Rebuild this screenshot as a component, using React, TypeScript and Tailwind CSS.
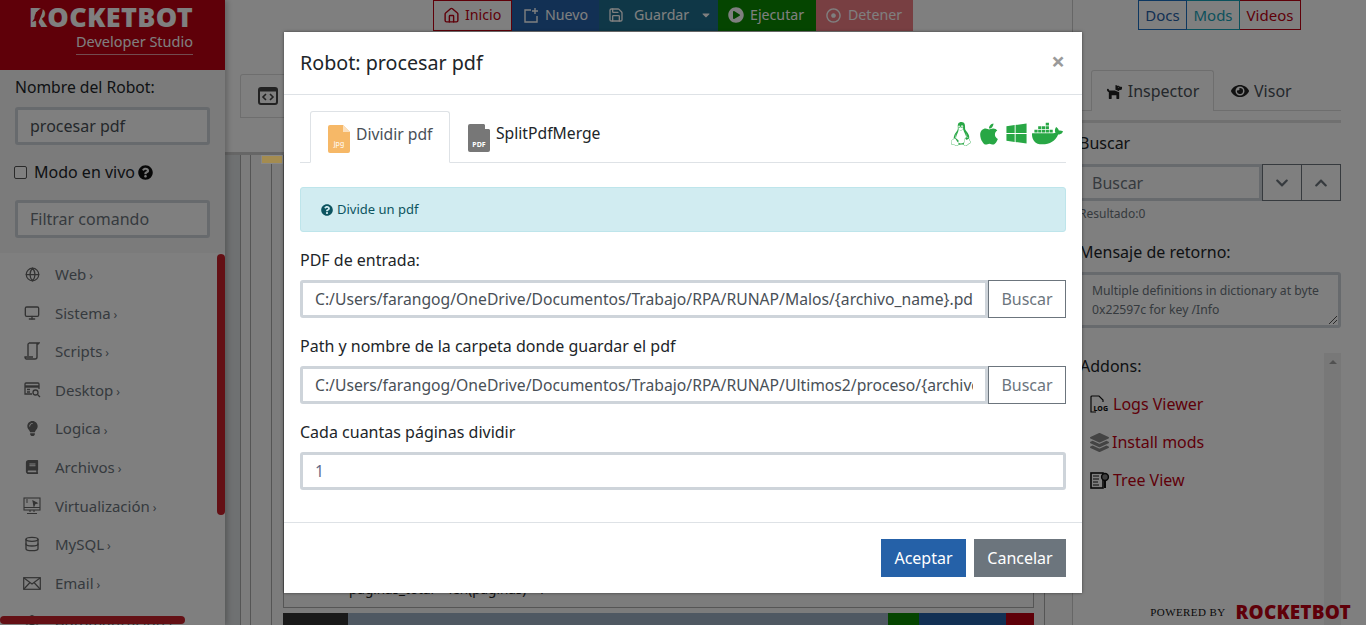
import { useState } from 'react';
import { Globe, Monitor, Database, Home, Save } from 'lucide-react';
import {
  FaApple, FaBook, FaCaretDown, FaChevronDown, FaChevronUp, FaDocker, FaDog, FaEye, FaLightbulb,
  FaLinux, FaPlayCircle, FaQuestionCircle, FaRegDotCircle, FaWindows, FaLayerGroup,
} from 'react-icons/fa';

const font = "font-['Noto_Sans',sans-serif]";

const ScriptIcon = () => (
  <svg width="16" height="18" viewBox="0 0 16 18" fill="none" stroke="currentColor" strokeWidth="1.4"><path d="M5 1h10l-1 1h-1v13a2 2 0 0 1-2 2H2a2 2 0 0 1-1-2h8v0M5 1a2 2 0 0 0-1 2v11" /></svg>
);
const DesktopIcon = () => (
  <svg width="17" height="16" viewBox="0 0 17 16" fill="none" stroke="currentColor" strokeWidth="1.3"><path d="M8 12H1V2a1 1 0 0 1 1-1h12a1 1 0 0 1 1 1v5" /><path d="M1 4.5h14" strokeWidth="2.4" /><circle cx="11.5" cy="10.5" r="2.5" /><path d="M13.5 12.5l2.5 2.5M3 7.5h3M3 10h3" /></svg>
);
const VirtualIcon = () => (
  <svg width="18" height="18" viewBox="0 0 18 18" fill="none" stroke="currentColor" strokeWidth="1.1"><rect x="1" y="1" width="16" height="12" /><path d="M1 10.5h16M7 13v2M11 13v2M4 16.5h10M3 3h2M3 5h2" /><path d="M10 4l4 2-2 .6L11 9z" fill="currentColor" /></svg>
);
const MailIcon = () => (
  <svg width="18" height="13" viewBox="0 0 18 13" fill="none" stroke="currentColor" strokeWidth="1.2"><rect x="0.7" y="0.7" width="16.6" height="11.6" /><path d="M1 1l8 6 8-6M1 12l6-6.5M17 12l-6-6.5" /></svg>
);

const commands = [
  { name: 'Web', icon: <Globe size={15} /> },
  { name: 'Sistema', icon: <Monitor size={16} /> },
  { name: 'Scripts', icon: <ScriptIcon /> },
  { name: 'Desktop', icon: <DesktopIcon /> },
  { name: 'Logica', icon: <FaLightbulb size={15} /> },
  { name: 'Archivos', icon: <FaBook size={14} /> },
  { name: 'Virtualización', icon: <VirtualIcon /> },
  { name: 'MySQL', icon: <Database size={16} /> },
  { name: 'Email', icon: <MailIcon /> },
  { name: 'Automatización', icon: <FaLayerGroup size={14} /> },
];

const Logo = () => (
  <div className="relative leading-none">
    <span className="block text-[27px] font-black leading-[24px] tracking-[0.3px] text-white">ROCKETBOT</span>
    <svg viewBox="0 0 10 14" className="absolute left-[3px] top-[2px] h-[18px] w-[12px]">
      <path d="M9 0 C4 2 2 6 2 9 L0 12 L3 11 L5 13 C7 8 9 5 9 0Z" fill="#be0012" />
    </svg>
  </div>
);

const Sidebar = () => (
  <aside className="relative z-10 flex h-[625px] w-[225px] shrink-0 flex-col overflow-hidden bg-white shadow-[2px_0_6px_rgba(0,0,0,0.25)]">
    <div className="flex h-[70px] shrink-0 flex-col items-end bg-[#be0012] pr-[32px] pt-[5px] shadow-md">
      <Logo />
      <div className="mt-[1px] border-b border-white/60 pb-[2px] text-[14.5px] leading-[22px] text-white">Developer Studio</div>
    </div>
    <div className="flex h-[183px] shrink-0 flex-col bg-[#f6f6f6] px-[15px] pt-[5px]">
      <label className="text-[15.7px] leading-[24px] text-[#212529]">Nombre del Robot:</label>
      <input readOnly value="procesar pdf" className="mt-[8px] h-[38px] w-[195px] rounded-[3px] border-[3px] border-[#ced4da] bg-white px-[12px] text-[16px] text-[#495057]" />
      <label className="-ml-px mt-[15px] flex items-center text-[16px] leading-[24px] text-[#212529]">
        <span className="mr-[7px] h-[13px] w-[13px] rounded-[2px] border border-[#555] bg-white" />
        Modo en vivo
        <FaQuestionCircle size={15} className="ml-[3px] text-[#111]" />
      </label>
      <input readOnly value="Filtrar comando" className="mt-[16px] h-[38px] w-[195px] rounded-[3px] border-[3px] border-[#ced4da] bg-white px-[12px] text-[16px] text-[#6c757d]" />
    </div>
    <ul className="pt-[2px]">
      {commands.map((c) => (
        <li key={c.name} className="flex h-[38.6px] items-center text-[15px] text-[#6c757d]">
          <span className="flex w-[55px] shrink-0 justify-center pl-[18px] pr-[9px] text-[#666]">{c.icon}</span>
          {c.name}
          <span className="ml-[3px] mt-[4px] text-[12px]">›</span>
        </li>
      ))}
    </ul>
    <div className="absolute right-0 top-[254px] h-[261px] w-[8px] rounded-[4px] bg-[#c8202a]" />
    <div className="absolute bottom-[1px] left-0 h-[8px] w-[185px] rounded-[4px] bg-[#c8202a]" />
  </aside>
);

const MainArea = () => (
  <main className="flex h-[625px] w-[847px] shrink-0 flex-col">
    <nav className="flex h-[31px] shrink-0 pl-[208px] text-[14.2px] leading-none text-white">
      <a className="flex w-[79px] items-center gap-[5px] border border-[#be0012] pb-[1px] pl-[9px] text-[#be0012]"><Home size={17} />Inicio</a>
      <a className="flex w-[87px] items-center gap-[5px] bg-[#2561a8] pb-[1px] pl-[11px]"><svg width="17" height="17" viewBox="0 0 17 17" fill="none" stroke="currentColor" strokeWidth="1.4"><path d="M8 3H2v12h12V9M12 1v6M9 4h6" /></svg>Nuevo</a>
      <a className="flex w-[119px] items-center gap-[10px] bg-[#1e6f8e] pb-[1px] pl-[9px]"><Save size={16} />Guardar<FaCaretDown size={12} className="ml-[1px]" /></a>
      <a className="flex w-[98px] items-center gap-[6px] bg-[#0a8a00] pb-[1px] pl-[10px]"><FaPlayCircle size={16} />Ejecutar</a>
      <a className="flex w-[97px] items-center gap-[7px] bg-[#f07f85] pb-[1px] pl-[10px]"><FaRegDotCircle size={15} />Detener</a>
    </nav>
    <div className="ml-[15px] mt-[43px] flex h-[44px] shrink-0 items-center border-b border-[#ddd]">
      <div className="flex h-[44px] w-[70px] items-center rounded-t-[3px] border border-b-0 border-[#ddd] pl-[17px]">
        <svg width="20" height="18" viewBox="0 0 20 18" className="shrink-0 text-[#444]"><rect x="1" y="1" width="18" height="16" rx="2" fill="none" stroke="currentColor" strokeWidth="2" /><path d="M1 3h18" stroke="currentColor" strokeWidth="3" /><path d="M8 7l-3 3 3 3M12 7l3 3-3 3" fill="none" stroke="currentColor" strokeWidth="1.6" /></svg>
      </div>
    </div>
    <div className="mt-[34px] flex min-h-0 flex-1 border-t-[3px] border-[#ccc] bg-[#f8f8f8]">
      <div className="h-full w-[16px] border-r border-[#aaa] bg-[#dfe2e4]" />
      <div className="h-full w-[10px] border-r border-[#aaa]" />
      <div className="relative h-full w-[21px] border-r border-[#aaa]">
        <div className="absolute left-[10px] top-0 z-30 h-[9px] w-[22px] border border-[#888] bg-[#a48c50]" />
      </div>
      <div className="flex w-[762px] shrink-0 flex-col pl-[11px]">
        <div className="flex flex-1 flex-col justify-end border-x border-b border-[#aaa] pb-[9px] pl-[65px] text-[13.5px] leading-[18px] text-[#222]">
          paginas_total = len(paginas) - 1
        </div>
        <div className="mt-[5px] flex h-[12px] shrink-0 bg-[#9fb1c4]">
          <div className="w-[65px] bg-[#333]" />
          <div className="flex-1" />
          <div className="w-[31px] bg-[#0a8a00]" />
          <div className="w-[87px] bg-[#2561a8]" />
          <div className="w-[28px] bg-[#be0012]" />
        </div>
      </div>
      <div className="ml-[10px] h-full flex-1 border-l border-[#aaa]" />
    </div>
  </main>
);

const LogIcon = () => (
  <svg width="20" height="19" viewBox="0 0 20 19" className="shrink-0 text-[#111]"><path d="M6 17H1V2a1 1 0 0 1 1-1h7l4 4v2" fill="none" stroke="currentColor" strokeWidth="1.2" /><text x="3.5" y="16" fontSize="7" fontWeight="800" fill="currentColor">LOG</text></svg>
);
const TreeIcon = () => (
  <svg width="20" height="19" viewBox="0 0 20 19" className="shrink-0 text-[#111]"><rect x="1" y="2" width="12" height="15" fill="none" stroke="currentColor" strokeWidth="1.6" /><path d="M3 5h6M3 8h6M3 11h5M3 14h6" stroke="currentColor" /><circle cx="15" cy="6" r="3.4" fill="#808080" stroke="currentColor" strokeWidth="1.5" /><path d="M15 9v8" stroke="currentColor" strokeWidth="2" /></svg>
);

const Inspector = () => (
  <section className="relative h-[625px] w-[294px] shrink-0 border-l border-[#ccc] pr-[25px] text-[#212529]">
    <div className="flex h-[31px] pl-[65px] text-[15px] leading-none">
      <a className="flex h-[30px] w-[49px] items-center justify-center border border-[#1b6ec2] text-[#2561a8]">Docs</a>
      <a className="flex h-[30px] w-[53px] items-center justify-center border border-l-0 border-[#17a2b8] text-[#17a2b8]">Mods</a>
      <a className="flex h-[30px] w-[61px] items-center justify-center border border-l-0 border-[#be0012] text-[#be0012]">Videos</a>
    </div>
    <div className="mt-[39px] flex h-[41px] border-b border-[#ddd] pl-[18px] text-[16px]">
      <span className="flex h-[41px] w-[123px] items-center justify-center gap-[5px] rounded-t-[3px] border border-b-0 border-[#ddd] bg-white text-[#495057]"><FaDog size={17} className="text-[#222]" />Inspector</span>
      <span className="flex h-[41px] items-center gap-[5px] pl-[17px] text-[#495057]"><FaEye size={18} className="text-[#222]" />Visor</span>
    </div>
    <div className="mt-[9px] h-[3px] bg-[#e0e0e0]" />
    <p className="mt-[8px] pl-[6px] text-[16px] leading-[24px]">Buscar</p>
    <div className="mt-[9px] flex h-[37px]">
      <input readOnly value="Buscar" className="h-[37px] min-w-0 flex-1 border-[3px] border-[#ced4da] bg-white pl-[16px] text-[16px] text-[#6c757d]" />
      <span className="flex w-[40px] items-center justify-center border border-[#6c757d] text-[#6c757d]"><FaChevronDown size={14} /></span>
      <span className="flex w-[39px] items-center justify-center border border-l-0 border-[#6c757d] text-[#6c757d]"><FaChevronUp size={14} /></span>
    </div>
    <p className="mt-[4px] pl-[6px] text-[12px] leading-[18px] text-[#6c757d]">Resultado:0</p>
    <p className="mt-[17px] pl-[6px] text-[16px] leading-[24px]">Mensaje de retorno:</p>
    <div className="relative mt-[8px] h-[56px] whitespace-nowrap rounded-[3px] border-[3px] border-[#ced4da] pl-[16px] pt-[6px] text-[12.2px] leading-[19px] text-[#6c757d]">
      Multiple definitions in dictionary at byte<br />0x22597c for key /Info
      <svg width="10" height="10" viewBox="0 0 10 10" className="absolute bottom-0 right-0 text-[#555]"><path d="M1 9l8-8M5 9l4-4" stroke="currentColor" /></svg>
    </div>
    <div className="relative mt-[25px] h-[272px] pl-[7px]">
      <div className="absolute right-0 top-0 h-full w-[17px] bg-[#f1f1f1]">
        <div className="mx-auto mt-[7px] h-0 w-0 border-x-[4px] border-b-[4px] border-x-transparent border-b-[#a3a3a3]" />
      </div>
      <p className="pt-[1px] text-[16px] leading-[24px]">Addons:</p>
      <ul className="ml-[10px] mt-[14px] flex flex-col gap-[14px] text-[16px] leading-[24px] text-[#be0012]">
        <li className="flex items-center gap-[3px]"><LogIcon />Logs Viewer</li>
        <li className="flex items-center gap-[3px]"><FaLayerGroup size={19} className="text-[#888]" />Install mods</li>
        <li className="flex items-center gap-[3px]"><TreeIcon />Tree View</li>
      </ul>
    </div>
    <div className="absolute bottom-[3px] right-[15px] flex items-center gap-[10px]">
      <span className="font-['Liberation_Serif',serif] text-[11px] leading-none tracking-[0.4px] text-[#111]">POWERED BY</span>
      <span className="text-[19px] font-black leading-none tracking-[0.2px] text-[#be0012]">ROCKETBOT</span>
    </div>
  </section>
);

const PathField = ({ label, value }: { label: string; value: string }) => (
  <div className="mb-[16px]">
    <label className="mb-[8px] block text-[16px] leading-[24px] text-[#212529]">{label}</label>
    <div className="flex h-[38px]">
      <input readOnly value={value} className="h-[38px] min-w-0 flex-1 rounded-l-[3px] border-[3px] border-[#ced4da] px-[12px] text-[15.7px] text-[#495057]" />
      <button className="w-[78px] border border-[#6c757d] text-[16px] text-[#6c757d]">Buscar</button>
    </div>
  </div>
);

const Modal = () => {
  const [pages] = useState('1');
  return (
    <div className="absolute left-[284px] top-[32px] z-30 h-[561px] w-[798px] bg-white text-[#212529] shadow-[0_0_3px_rgba(0,0,0,0.5)]">
      <header className="flex h-[63px] items-center justify-between border-b border-[#dee2e6] px-[16px]">
        <h2 className="text-[19.7px] leading-[30px]">Robot: procesar pdf</h2>
        <span className="-mt-[4px] pr-[1px] text-[24px] font-bold leading-none text-[#9a9a9a]">×</span>
      </header>
      <div className="h-[427px] px-[16px] pt-[16px]">
        <div className="relative flex h-[52px] items-end border-b border-[#dee2e6] pl-[10px]">
          <span className="-mb-px flex h-[52px] w-[140px] items-center gap-[6px] rounded-t-[3px] border border-b-white border-[#dee2e6] bg-white pl-[17px] text-[15.7px] text-[#495057]">
            <svg width="22" height="28" viewBox="0 0 22 28" className="mt-[4px] shrink-0"><path d="M2 0h13l7 7v19a2 2 0 0 1-2 2H2a2 2 0 0 1-2-2V2a2 2 0 0 1 2-2z" fill="#f6b867" /><path d="M15 0l7 7h-7z" fill="#fbe0bd" /><text x="11" y="21" fontSize="7" fill="#fff" textAnchor="middle">jpg</text></svg>
            <span className="-mt-[5px]">Dividir pdf</span>
          </span>
          <span className="flex h-[52px] items-center gap-[6px] pl-[18px] text-[15.7px] text-[#212529]">
            <svg width="22" height="28" viewBox="0 0 22 28" className="mt-[4px] shrink-0"><path d="M2 0h14l6 6v20a2 2 0 0 1-2 2H2a2 2 0 0 1-2-2V2a2 2 0 0 1 2-2z" fill="#777" /><path d="M17 0l5 5h-5z" fill="#fff" /><text x="11" y="23" fontSize="7" fontWeight="700" fill="#fff" textAnchor="middle">PDF</text></svg>
            <span className="-mt-[5px]">SplitPdfMerge</span>
          </span>
          <div className="absolute right-[3px] top-[7px] flex items-center gap-[4px] text-[#28a745]">
            <FaLinux size={24} /><FaApple size={24} /><FaWindows size={23} /><FaDocker size={31} />
          </div>
        </div>
        <div className="mt-[24px] flex h-[45px] items-center gap-[4px] rounded-[3px] border border-[#bee5eb] bg-[#d1ecf1] pl-[20px] text-[13px] text-[#0c5460]">
          <FaQuestionCircle size={12} />Divide un pdf
        </div>
        <div className="mt-[16px]">
          <PathField label="PDF de entrada:" value="C:/Users/farangog/OneDrive/Documentos/Trabajo/RPA/RUNAP/Malos/{archivo_name}.pdf" />
          <PathField label="Path y nombre de la carpeta donde guardar el pdf" value="C:/Users/farangog/OneDrive/Documentos/Trabajo/RPA/RUNAP/Ultimos2/proceso/{archivo_name}.pdf" />
          <label className="mb-[8px] block text-[16px] leading-[24px]">Cada cuantas páginas dividir</label>
          <input readOnly value={pages} className="h-[38px] w-full rounded-[3px] border-[3px] border-[#ced4da] px-[12px] text-[15.7px] text-[#5f6b8a]" />
        </div>
      </div>
      <footer className="flex h-[71px] items-center justify-end gap-[8px] border-t border-[#dee2e6] px-[16px]">
        <button className="h-[38px] w-[85px] bg-[#2561a8] text-[16px] text-white">Aceptar</button>
        <button className="h-[38px] w-[92px] bg-[#6c757d] text-[16px] text-white">Cancelar</button>
      </footer>
    </div>
  );
};

export default function App() {
  return (
    <div className={`relative h-[625px] w-[1366px] overflow-hidden bg-white ${font}`}>
      <div className="flex h-full">
        <Sidebar />
        <MainArea />
        <Inspector />
      </div>
      <div className="absolute inset-0 z-20 bg-black/50" />
      <Modal />
    </div>
  );
}
